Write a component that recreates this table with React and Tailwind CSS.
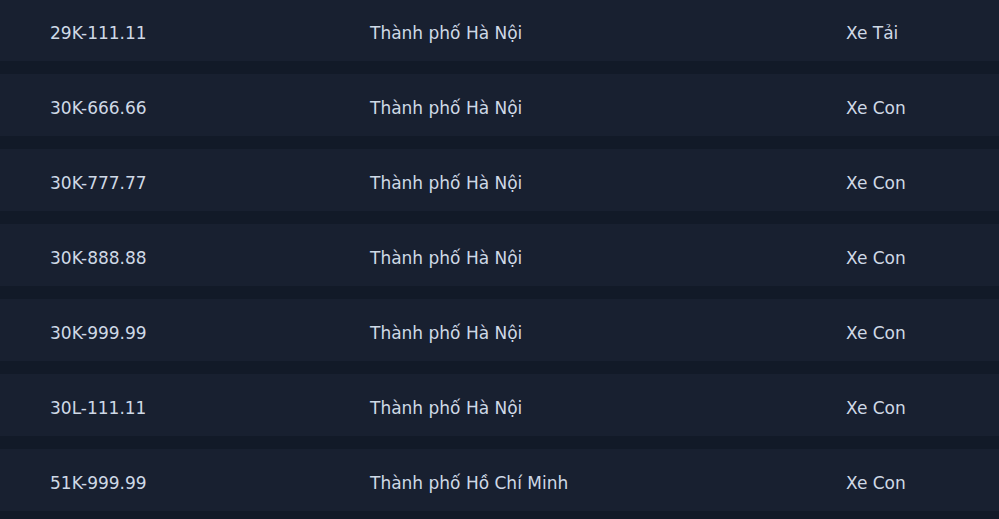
const rows = [
  ["29K-111.11", "Thành phố Hà Nội", "Xe Tải"],
  ["30K-666.66", "Thành phố Hà Nội", "Xe Con"],
  ["30K-777.77", "Thành phố Hà Nội", "Xe Con"],
  ["30K-888.88", "Thành phố Hà Nội", "Xe Con"],
  ["30K-999.99", "Thành phố Hà Nội", "Xe Con"],
  ["30L-111.11", "Thành phố Hà Nội", "Xe Con"],
  ["51K-999.99", "Thành phố Hồ Chí Minh", "Xe Con"],
];

export default function App() {
  return (
    <div
      className="w-[999px] h-[519px] overflow-hidden bg-[#121a28] text-[#cfd9e6] text-[17px]"
      style={{ fontFamily: '"DejaVu Sans", sans-serif' }}
    >
      <div className="-mt-px flex flex-col gap-[13px]">
        {rows.map((r, i) => (
          <div key={i} className="h-[62px] pt-[7px] bg-[#182030] flex items-center">
            <div className="w-[370px] pl-[50px]">{r[0]}</div>
            <div className="w-[476px]">{r[1]}</div>
            <div className="flex-1">{r[2]}</div>
          </div>
        ))}
      </div>
    </div>
  );
}
